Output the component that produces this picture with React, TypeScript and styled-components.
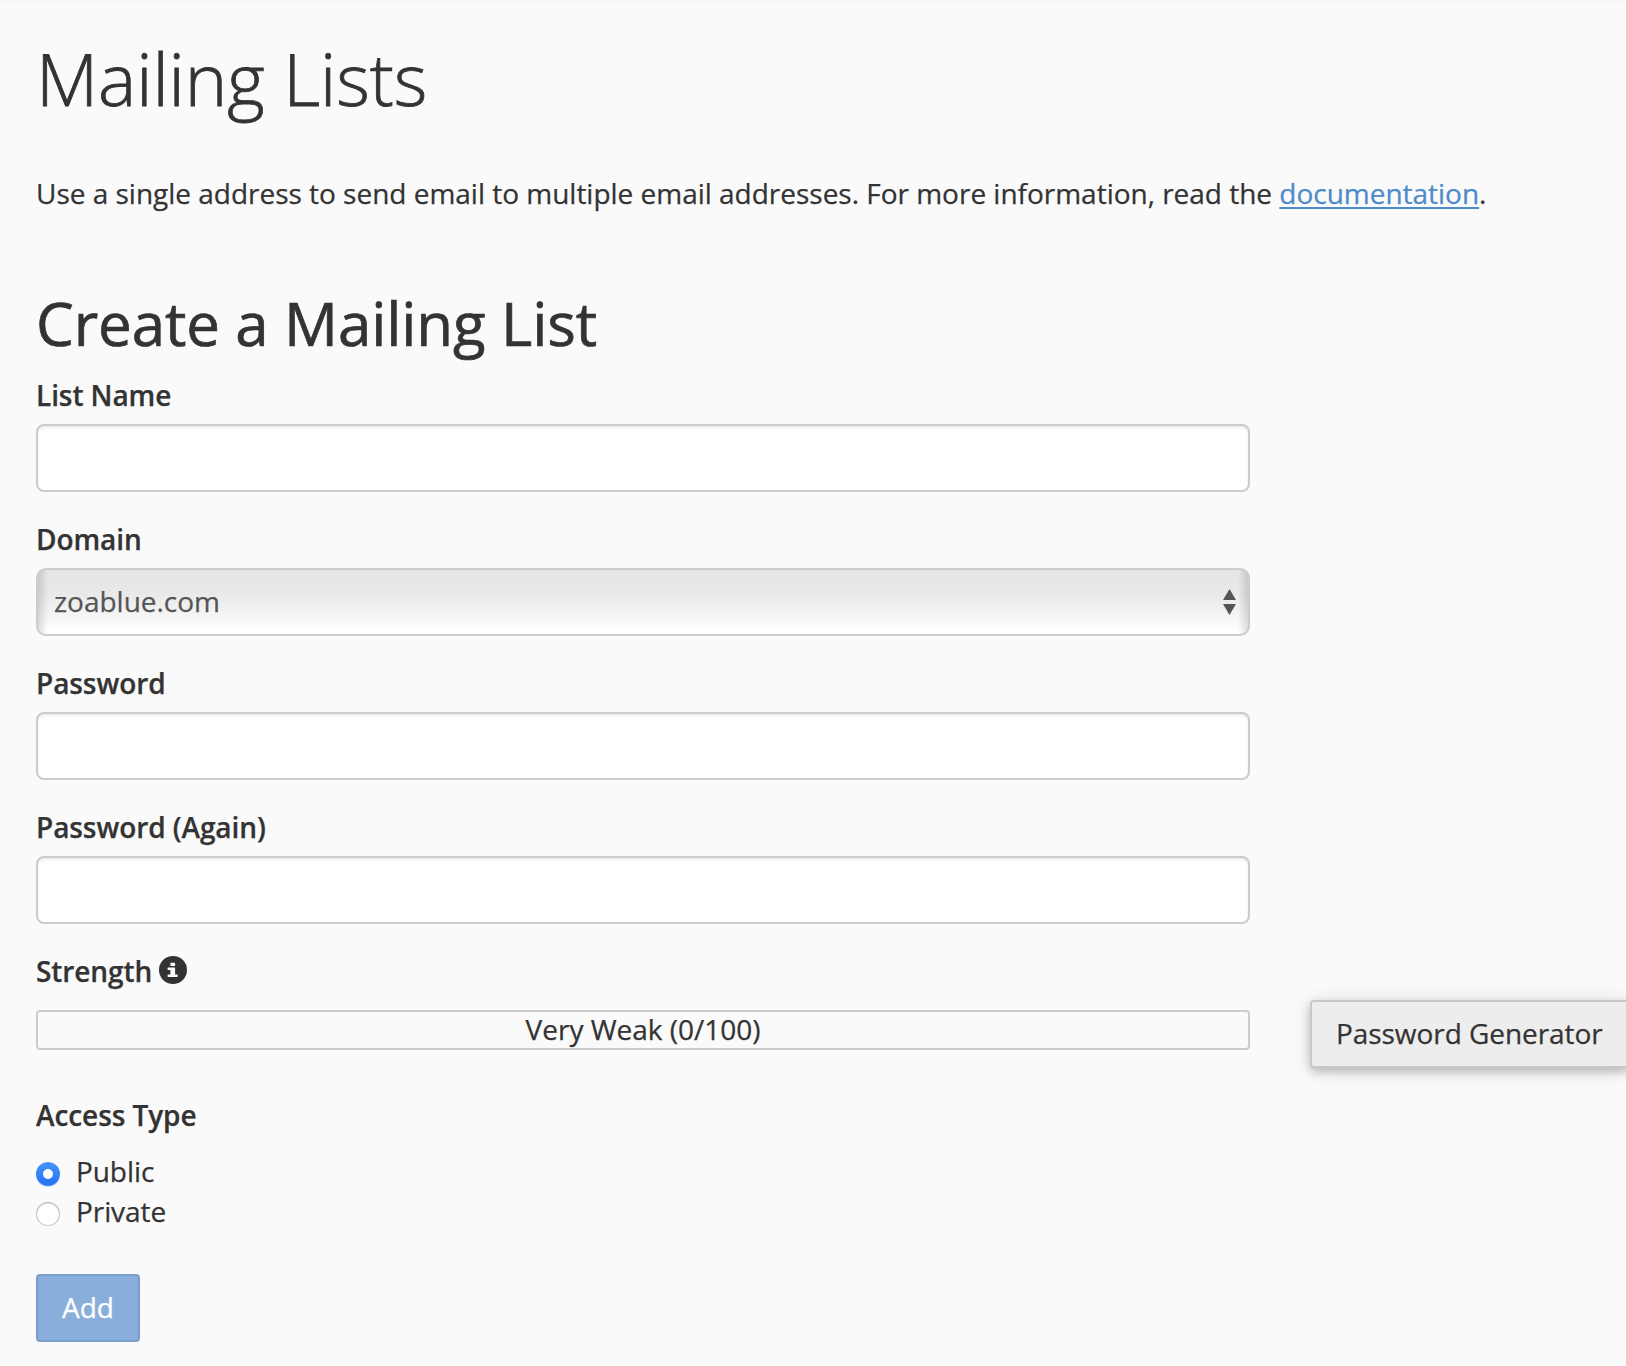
import React from "react";
import styled, { createGlobalStyle } from "styled-components";

const GlobalStyle = createGlobalStyle`
  * { box-sizing: border-box; }
  body {
    margin: 0;
    background: #fafafa;
    color: #333;
    font: 400 28px/40px "Open Sans", "Noto Sans", sans-serif;
    letter-spacing: -0.015px;
    -webkit-text-stroke: 0.25px currentColor;
    overflow: hidden;
  }
`;

const Page = styled.main`
  height: 1366px;
  padding: 34px 0 0 36px;
  border-top: 4px solid #f8f8f8;
  overflow: hidden;
`;

const Title = styled.h1`
  margin: 0 0 55px;
  font-size: 72px;
  font-weight: 300;
  line-height: 80px;
  letter-spacing: -0.06px;
  -webkit-text-stroke-width: 0.8px;
`;

const Intro = styled.p`
  margin: 0 0 77px;
  white-space: nowrap;
`;

const DocLink = styled.a`
  color: #4f8aca;
  text-decoration: underline;
  text-decoration-thickness: 2px;
  text-underline-offset: 3px;
  text-decoration-skip-ink: none;
`;

const SectionTitle = styled.h2`
  margin: 0 0 19px;
  font-size: 60px;
  font-weight: 400;
  line-height: 66px;
  letter-spacing: -0.1px;
  -webkit-text-stroke-width: 0.7px;
`;

const Field = styled.div<{ $gap?: number; $after?: number }>`
  display: flex;
  flex-direction: column;
  gap: ${(p) => p.$gap ?? 9}px;
  width: 1214px;
  margin-bottom: ${(p) => p.$after ?? 27}px;
`;

const Label = styled.label`
  display: flex;
  align-items: center;
  gap: 7px;
  height: 40px;
  font-weight: 600;
  letter-spacing: -0.08px;
`;

const TextInput = styled.input`
  width: 100%;
  height: 68px;
  padding: 0 16px;
  border: 2px solid #ccc;
  border-radius: 8px;
  background: #fff;
  box-shadow: inset 0 2px 3px rgba(0, 0, 0, 0.08);
  font: inherit;
  outline: none;
`;

const SelectBox = styled.div`
  display: flex;
  align-items: center;
  justify-content: space-between;
  height: 68px;
  padding: 0 12px 0 16px;
  border: 2px solid #ccc;
  border-radius: 10px;
  color: #555;
  background:
    linear-gradient(to right, rgba(0, 0, 0, 0.13), transparent 10px, transparent calc(100% - 10px), rgba(0, 0, 0, 0.13)),
    linear-gradient(#e5e5e5 0%, #e9e9e9 38%, #efefef 56%, #fff 96%);
`;

const SelectValue = styled.span`
  padding-bottom: 2px;
`;

const StrengthRow = styled.div`
  display: flex;
  align-items: flex-start;
  gap: 60px;
  height: 40px;
`;

const Meter = styled.div`
  flex: none;
  width: 1214px;
  height: 40px;
  border: 2px solid #ccc;
  border-radius: 4px;
  line-height: 34px;
  text-align: center;
`;

const Button = styled.button<{ $primary?: boolean }>`
  flex: none;
  height: 68px;
  padding: 0 24px 2px;
  border: 2px solid ${(p) => (p.$primary ? "#769fca" : "#c8c8c8")};
  border-radius: 4px;
  background: ${(p) => (p.$primary ? "#8aaedb" : "#ededed")};
  color: ${(p) => (p.$primary ? "#fff" : "#333")};
  font: inherit;
  letter-spacing: ${(p) => (p.$primary ? 0 : -0.06)}px;
  white-space: nowrap;
`;

const GeneratorButton = styled(Button)`
  margin-top: -10px;
  box-shadow: 0 4px 10px rgba(0, 0, 0, 0.2), 0 2px 20px rgba(0, 0, 0, 0.12);
`;

const Option = styled.label`
  display: flex;
  align-items: center;
  gap: 16px;
  height: 40px;
  letter-spacing: -0.08px;
`;

const Radio = styled.span<{ $checked?: boolean }>`
  display: grid;
  place-items: center;
  width: 24px;
  height: 24px;
  margin-top: 6px;
  border-radius: 50%;
  background: ${(p) => (p.$checked ? "linear-gradient(#4a94f8, #2273f5)" : "#fff")};
  box-shadow: ${(p) =>
    p.$checked
      ? "0 1px 1px rgba(34, 115, 245, 0.2)"
      : "inset 0 0 0 1px rgba(0, 0, 0, 0.19), inset 0 1px 3px rgba(0, 0, 0, 0.18)"};

  &::after {
    content: "";
    width: 10px;
    height: 10px;
    border-radius: 50%;
    background: #fff;
  }
`;

const Options = styled.div`
  margin: 16px 0 43px;
`;

const Icon = styled.svg`
  flex: none;
  margin-top: -2px;
`;

const InfoIcon = () => (
  <Icon width="28" height="28" viewBox="0 0 28 28">
    <circle cx="14" cy="14" r="14" fill="#333" />
    <path
      fill="#fafafa"
      d="M11.8 6.800h3.900q.4 0 .4.400v2.300q0 .4-.4.400h-3.900q-.4 0-.4-.4V7.200q0-.4.4-.4zM9 11.600h6.700q.4 0 .4.400v6.500h2.200q.4 0 .4.400v1.700q0 .4-.4.400H9q-.4 0-.4-.4v-1.700q0-.4.400-.4h2.400v-4.500H9q-.4 0-.4-.4V12q0-.4.400-.4z"
    />
  </Icon>
);

const SelectArrows = () => (
  <svg width="13" height="26" viewBox="0 0 13 26" fill="#555">
    <path d="M6.500 0 13 11H0zM0 15h13L6.500 26z" />
  </svg>
);

export default function App() {
  return (
    <Page>
      <GlobalStyle />
      <Title>Mailing Lists</Title>
      <Intro>
        Use a single address to send email to multiple email addresses. For more information, read the{" "}
        <DocLink>documentation</DocLink>.
      </Intro>
      <SectionTitle>Create a Mailing List</SectionTitle>
      <Field>
        <Label htmlFor="name">List Name</Label>
        <TextInput id="name" />
      </Field>
      <Field>
        <Label>Domain</Label>
        <SelectBox>
          <SelectValue>zoablue.com</SelectValue>
          <SelectArrows />
        </SelectBox>
      </Field>
      <Field>
        <Label htmlFor="password">Password</Label>
        <TextInput id="password" type="password" />
      </Field>
      <Field>
        <Label htmlFor="again">Password (Again)</Label>
        <TextInput id="again" type="password" />
      </Field>
      <Field $gap={19} $after={45}>
        <Label>
          Strength <InfoIcon />
        </Label>
        <StrengthRow>
          <Meter>Very Weak (0/100)</Meter>
          <GeneratorButton>Password Generator</GeneratorButton>
        </StrengthRow>
      </Field>
      <Label as="div">Access Type</Label>
      <Options>
        <Option>
          <Radio $checked />
          Public
        </Option>
        <Option>
          <Radio />
          Private
        </Option>
      </Options>
      <Button $primary>Add</Button>
    </Page>
  );
}
